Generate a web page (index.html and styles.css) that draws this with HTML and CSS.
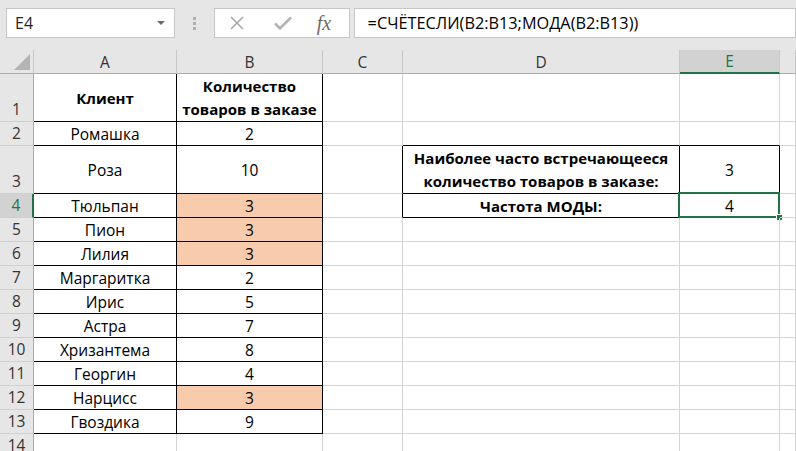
FILE: index.html
```html
<!DOCTYPE html>
<html lang="ru">
<head>
<meta charset="utf-8">
<title>Excel</title>
<link rel="stylesheet" href="styles.css">
</head>
<body>
<div class="app">
  <div class="toolbar">
    <div class="namebox"><span class="nb-text">E4</span><span class="nb-arrow"></span></div>
    <div class="grip"><i></i><i></i><i></i></div>
    <div class="fxbox">
      <svg class="ic-x" width="16" height="16" viewBox="0 0 16 16"><path d="M2 2 L14 14 M14 2 L2 14" stroke="#a8a8a8" stroke-width="1.6" fill="none"/></svg>
      <svg class="ic-ok" width="20" height="16" viewBox="0 0 20 16"><path d="M2 8.5 L7 13.5 L18 2.5" stroke="#b4b4b4" stroke-width="2.6" fill="none"/></svg>
      <span class="ic-fx">fx</span>
    </div>
    <div class="formula">=СЧЁТЕСЛИ(B2:B13;МОДА(B2:B13))</div>
  </div>

  <div class="sheet">
    <div class="corner"><span class="tri"></span></div>
    <div class="ch">A</div>
    <div class="ch">B</div>
    <div class="ch">C</div>
    <div class="ch">D</div>
    <div class="ch chsel">E</div>
    <div class="ch"></div>

    <div class="rh">1</div>
    <div class="c bk b">Клиент</div>
    <div class="c bk b wrap">Количество<br>товаров в заказе</div>
    <div class="c"></div><div class="c"></div><div class="c"></div><div class="c"></div>

    <div class="rh">2</div>
    <div class="c bk">Ромашка</div>
    <div class="c bk">2</div>
    <div class="c"></div><div class="c kb"></div><div class="c kb"></div><div class="c"></div>

    <div class="rh">3</div>
    <div class="c bk">Роза</div>
    <div class="c bk">10</div>
    <div class="c kr"></div>
    <div class="c bk b wrap">Наиболее часто встречающееся<br>количество товаров в заказе:</div>
    <div class="c bk">3</div>
    <div class="c"></div>

    <div class="rh rhsel">4</div>
    <div class="c bk">Тюльпан</div>
    <div class="c bk pk">3</div>
    <div class="c kr"></div>
    <div class="c bk b">Частота МОДЫ:</div>
    <div class="c bk active">4<span class="selbox"><span class="handle"></span></span></div>
    <div class="c"></div>

    <div class="rh">5</div>
    <div class="c bk">Пион</div>
    <div class="c bk pk">3</div>
    <div class="c"></div><div class="c"></div><div class="c"></div><div class="c"></div>

    <div class="rh">6</div>
    <div class="c bk">Лилия</div>
    <div class="c bk pk">3</div>
    <div class="c"></div><div class="c"></div><div class="c"></div><div class="c"></div>

    <div class="rh">7</div>
    <div class="c bk">Маргаритка</div>
    <div class="c bk">2</div>
    <div class="c"></div><div class="c"></div><div class="c"></div><div class="c"></div>

    <div class="rh">8</div>
    <div class="c bk">Ирис</div>
    <div class="c bk">5</div>
    <div class="c"></div><div class="c"></div><div class="c"></div><div class="c"></div>

    <div class="rh">9</div>
    <div class="c bk">Астра</div>
    <div class="c bk">7</div>
    <div class="c"></div><div class="c"></div><div class="c"></div><div class="c"></div>

    <div class="rh">10</div>
    <div class="c bk">Хризантема</div>
    <div class="c bk">8</div>
    <div class="c"></div><div class="c"></div><div class="c"></div><div class="c"></div>

    <div class="rh">11</div>
    <div class="c bk">Георгин</div>
    <div class="c bk">4</div>
    <div class="c"></div><div class="c"></div><div class="c"></div><div class="c"></div>

    <div class="rh">12</div>
    <div class="c bk">Нарцисс</div>
    <div class="c bk pk">3</div>
    <div class="c"></div><div class="c"></div><div class="c"></div><div class="c"></div>

    <div class="rh">13</div>
    <div class="c bk">Гвоздика</div>
    <div class="c bk">9</div>
    <div class="c"></div><div class="c"></div><div class="c"></div><div class="c"></div>

    <div class="rh">14</div>
    <div class="c"></div><div class="c"></div><div class="c"></div><div class="c"></div><div class="c"></div><div class="c"></div>
  </div>
</div>
</body>
</html>
```
FILE: styles.css
```css
* { box-sizing: border-box; }
html, body { margin: 0; padding: 0; }
body {
  width: 796px;
  height: 451px;
  overflow: hidden;
  background: #ffffff;
  font-family: "Open Sans", "Noto Sans", sans-serif;
  font-size: 15.5px;
  color: #000;
}
.app { width: 796px; }

/* toolbar */
.toolbar {
  height: 50px;
  background: #e6e6e6;
  display: flex;
  align-items: flex-start;
  padding: 8px 0 0 6px;
}
.namebox {
  width: 169px;
  height: 30px;
  background: #fff;
  border: 1px solid #c6c6c6;
  display: flex;
  align-items: center;
  justify-content: space-between;
  padding: 0 9px 0 8px;
  color: #262626;
}
.nb-text { font-size: 16px; }
.nb-arrow {
  width: 0; height: 0;
  border-left: 4px solid transparent;
  border-right: 4px solid transparent;
  border-top: 4px solid #6a6a6a;
}
.grip {
  width: 39px;
  height: 30px;
  display: flex;
  flex-direction: column;
  align-items: center;
  justify-content: center;
  gap: 2px;
}
.grip i {
  display: block;
  width: 3px;
  height: 3px;
  background: #b0b0b0;
}
.fxbox {
  width: 136px;
  height: 30px;
  background: #fff;
  border: 1px solid #c6c6c6;
  display: flex;
  align-items: center;
  padding-left: 14px;
}
.ic-x { margin-right: 28px; }
.ic-ok { margin-right: 24px; }
.ic-fx {
  font-family: "Liberation Serif", "DejaVu Serif", serif;
  font-style: italic;
  font-size: 20px;
  color: #6b6b6b;
  line-height: 1;
}
.formula {
  margin-left: 4px;
  width: 443px;
  height: 30px;
  background: #fff;
  border: 1px solid #c6c6c6;
  display: flex;
  align-items: center;
  padding-left: 13px;
  font-size: 16.3px;
  color: #000;
  white-space: nowrap;
}

/* sheet */
.sheet {
  display: grid;
  grid-template-columns: 34px 143px 146px 80px 277px 100px 1fr;
  grid-template-rows: 24px 48px 24px 48px repeat(11, 24px);
}
.c {
  border-right: 1px solid #d4d4d4;
  border-bottom: 1px solid #d4d4d4;
  display: flex;
  align-items: center;
  justify-content: center;
  text-align: center;
  white-space: nowrap;
  position: relative;
}
.bk { border-right-color: #000; border-bottom-color: #000; }
.kb { border-bottom-color: #000; }
.kr { border-right-color: #000; }
.b { font-weight: 700; font-size: 15px; }
.wrap { line-height: 23px; }
.pk { background: #f8cbad; }

.corner, .ch, .rh {
  background: #e6e6e6;
  color: #333;
}
.corner {
  border-right: 1px solid #c8c8c8;
  border-bottom: 1px solid #ababab;
  display: flex;
  align-items: flex-end;
  justify-content: flex-end;
  padding: 0 3px 3px 0;
}
.tri {
  width: 0; height: 0;
  border-left: 16px solid transparent;
  border-bottom: 16px solid #b4b4b4;
}
.ch {
  border-right: 1px solid #c8c8c8;
  border-bottom: 1px solid #ababab;
  display: flex;
  align-items: center;
  justify-content: center;
}
.chsel {
  background: #d2d2d2;
  border-bottom: 2px solid #217346;
  color: #217346;
}
.rh {
  border-right: 1px solid #ababab;
  border-bottom: 1px solid #cfcfcf;
  display: flex;
  align-items: flex-end;
  justify-content: center;
  padding-bottom: 1px;
  line-height: 22px;
}
.rhsel {
  background: #d2d2d2;
  border-right: 2px solid #217346;
  color: #217346;
}

.selbox {
  position: absolute;
  left: -2px;
  top: -2px;
  right: -1px;
  bottom: -1px;
  border: 2px solid #217346;
}
.handle {
  position: absolute;
  right: -4px;
  bottom: -4px;
  width: 6px;
  height: 6px;
  background: #217346;
  border: 1px solid #fff;
  border-right: none;
  border-bottom: none;
}
```
